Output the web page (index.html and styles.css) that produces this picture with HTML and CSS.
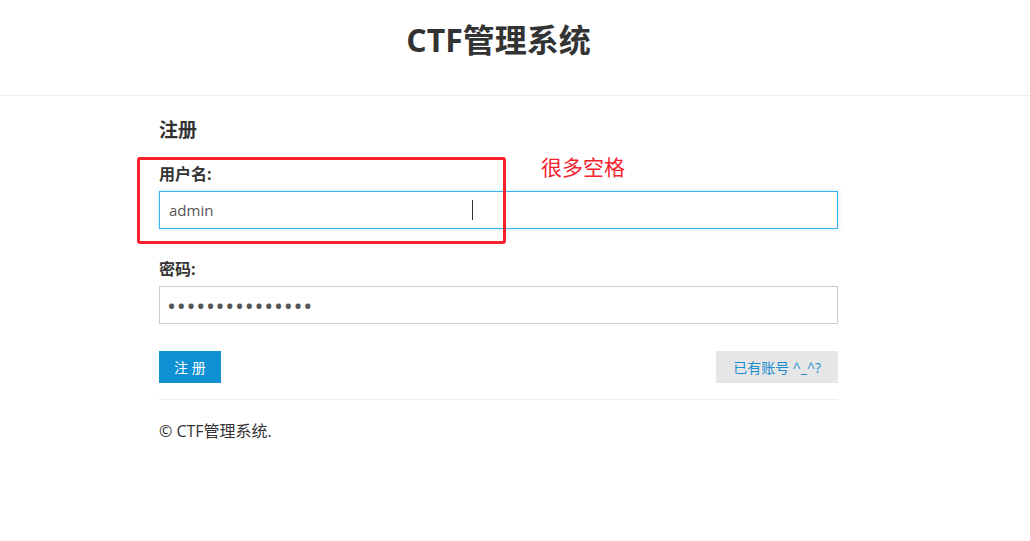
FILE: index.html
```html
<!DOCTYPE html>
<html lang="zh-CN">
<head>
    <meta charset="UTF-8">
    <title>CTF管理系统 - 注册</title>
    <link rel="stylesheet" href="styles.css">
</head>
<body>
    <!-- Header -->
    <div class="header">
        <div class="wrap">
            <h1>CTF管理系统</h1>
        </div>
    </div>

    <!-- Register form -->
    <div class="wrap main">
        <h2>注册</h2>
        <form class="form">
            <div class="field">
                <label for="username">用户名:</label>
                <div class="input-box">
                    <input type="text" id="username" class="focus" value="admin">
                    <span class="caret"></span>
                </div>
                <div class="mark"></div>
                <span class="note">很多空格</span>
            </div>
            <div class="field">
                <label for="password">密码:</label>
                <input type="password" id="password" value="123456789012345">
            </div>
            <div class="actions">
                <button type="button" class="btn btn-primary">注 册</button>
                <button type="button" class="btn btn-default">已有账号 ^_^?</button>
            </div>
        </form>
        <hr>
        <p class="footer">© CTF管理系统.</p>
    </div>
</body>
</html>
```

FILE: styles.css
```css
body { margin: 0; font-family: "Open Sans", "Noto Sans CJK SC", sans-serif; color: #333; background: #fff; }
.wrap { width: 679px; margin-left: 159px; }
.header { height: 95px; border-bottom: 1px solid #eee; }
.header h1 { margin: 0; padding-top: 18px; text-align: center; font-size: 32px; line-height: 44px; font-weight: bold; }
.main h2 { margin: 21px 0 0; font-size: 19px; line-height: 26px; font-weight: bold; }
.field { position: relative; margin-top: 21px; }
.field + .field { margin-top: 30px; }
label { display: block; font-size: 16px; font-weight: bold; line-height: 20px; margin-bottom: 7px; }
input { display: block; box-sizing: border-box; width: 100%; height: 38px; padding: 0 9px; font-size: 15px; font-family: inherit; color: #555; border: 1px solid #ccc; outline: none; }
input.focus { border-color: #3bb4f2; box-shadow: 0 0 5px rgba(59,180,242,.3); }
#password { font-size: 24px; letter-spacing: 0.7px; padding-left: 7px; }
.input-box { position: relative; }
.caret { position: absolute; left: 313px; top: 9px; width: 1px; height: 20px; background: #333; }
.mark { position: absolute; left: -22px; top: -7px; box-sizing: border-box; width: 369px; height: 87px; border: 3px solid #f5222d; border-radius: 3px; }
.note { position: absolute; left: 382px; top: -10px; color: #f5222d; font-size: 21px; line-height: 26px; }
.actions { display: flex; justify-content: space-between; margin-top: 27px; }
.btn { height: 32px; border: none; font-size: 14px; font-family: inherit; padding: 0 15px; cursor: pointer; }
.btn-primary { background: #0e90d2; color: #fff; }
.btn-default { background: #e6e6e6; color: #1a8dcf; padding: 0 17px; }
hr { border: none; border-top: 1px solid #eee; margin: 16px 0 0; }
.footer { margin: 21px 0 0; font-size: 16px; line-height: 20px; }
```
